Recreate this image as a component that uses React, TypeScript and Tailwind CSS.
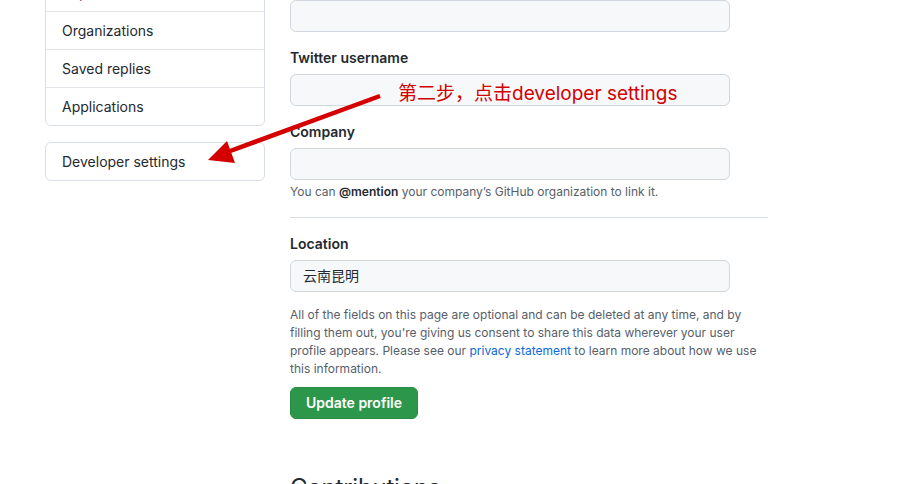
import { FC } from "react";

const font = { fontFamily: 'Inter, "Liberation Sans", "Noto Sans CJK SC", sans-serif' };

const menuItems = ["Repositories", "Organizations", "Saved replies", "Applications"];

const App: FC = () => {
  return (
    <div
      className="relative w-[900px] h-[484px] overflow-hidden bg-white text-[#24292f]"
      style={font}
    >
      <div className="flex gap-[25px] pl-[45px]">
        {/* Sidebar */}
        <div className="w-[220px] shrink-0 -mt-[27px]">
          <div className="border border-[#d8dee4] rounded-md">
            {menuItems.map((item, i) => (
              <div
                key={item}
                className={`px-4 flex items-center text-sm ${
                  i < menuItems.length - 1 ? "h-[38px] border-b border-[#e1e4e8]" : "h-[37px]"
                }`}
              >
                {item}
              </div>
            ))}
          </div>
          <div className="mt-4 border border-[#d8dee4] rounded-md">
            <div className="h-[37px] px-4 flex items-center text-sm">Developer settings</div>
          </div>
        </div>

        {/* Main form */}
        <div className="w-[478px]">
          <div className="w-[440px] h-[32px] bg-[#f6f8fa] border border-[#d0d7de] rounded-md" />

          <div className="mt-4 text-sm font-semibold leading-5">Twitter username</div>
          <div className="mt-[6px] w-[440px] h-[32px] bg-[#f6f8fa] border border-[#d0d7de] rounded-md" />

          <div className="mt-4 text-sm font-semibold leading-5">Company</div>
          <div className="mt-[6px] w-[440px] h-[32px] bg-[#f6f8fa] border border-[#d0d7de] rounded-md" />
          <p className="mt-[3px] text-xs leading-[18px] text-[#57606a]">
            You can <span className="font-semibold text-[#24292f]">@mention</span> your company’s
            GitHub organization to link it.
          </p>

          <div className="mt-4 h-px bg-[#d8dee4]" />

          <div className="mt-4 text-sm font-semibold leading-5">Location</div>
          <div className="mt-[6px] w-[440px] h-[32px] bg-[#f6f8fa] border border-[#d0d7de] rounded-md flex items-center px-3 text-sm">
            云南昆明
          </div>

          <p className="mt-[14px] text-xs leading-[18px] text-[#57606a]">
            All of the fields on this page are optional and can be deleted at any time, and by
            filling them out, you're giving us consent to share this data wherever your user
            profile appears. Please see our{" "}
            <span className="text-[#0969da]">privacy statement</span> to learn more about how we
            use this information.
          </p>

          <button className="mt-[9px] h-[32px] w-[128px] rounded-md bg-[#2c974b] border border-[#288c43] text-white text-sm font-semibold">
            Update profile
          </button>

          <h2 className="mt-[51px] text-2xl font-normal leading-9 tracking-[-0.2px]">Contributions</h2>
        </div>
      </div>

      {/* Annotation */}
      <svg className="absolute inset-0 pointer-events-none" width="900" height="484">
        <line x1="380" y1="96" x2="222" y2="154" stroke="#d40000" strokeWidth="4.5" />
        <polygon points="208,160 227,141 235,163" fill="#d40000" />
      </svg>
      <div className="absolute left-[398px] top-[82px] text-[19px] leading-6 text-[#d40000] whitespace-nowrap">
        第二步，点击developer settings
      </div>
    </div>
  );
};

export default App;
